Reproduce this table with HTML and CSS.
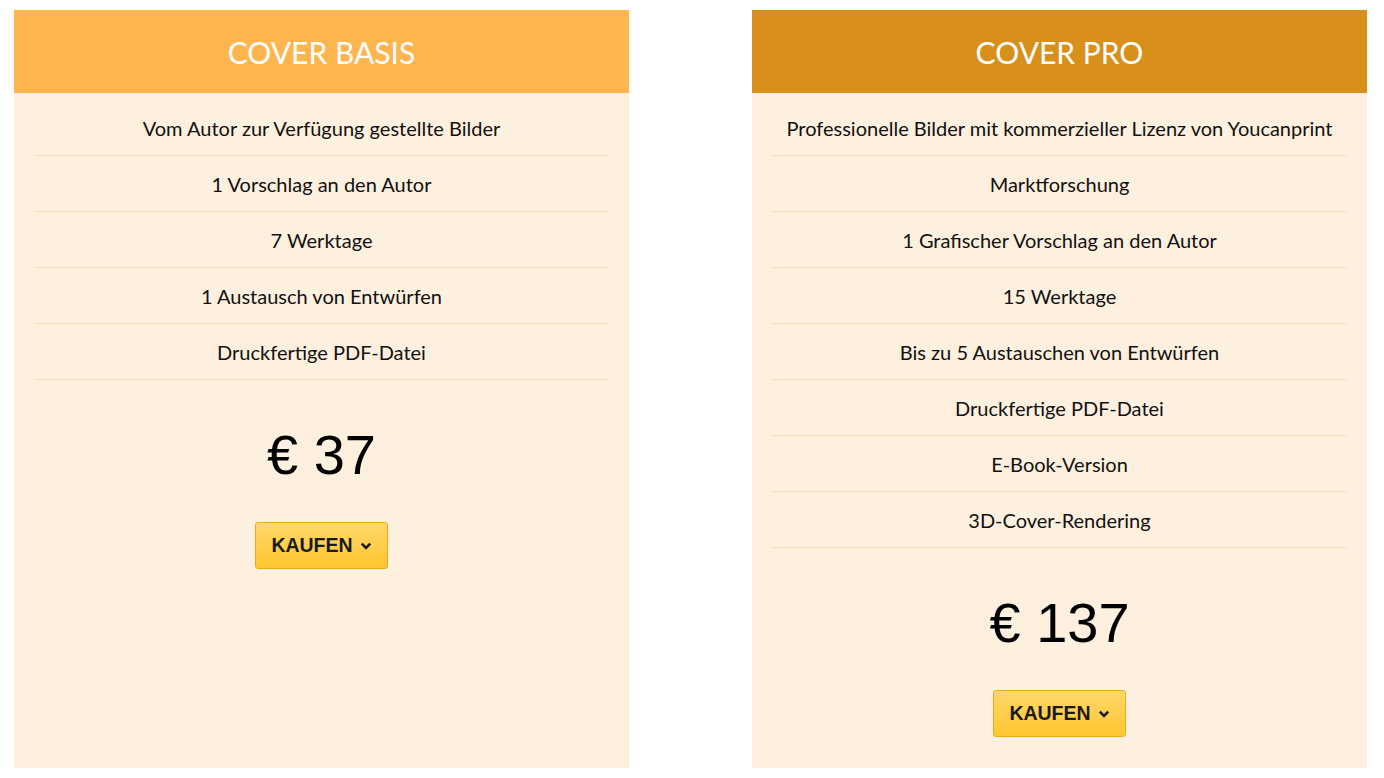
FILE: index.html
```html
<!DOCTYPE html>
<html lang="de">
<head>
<meta charset="utf-8">
<title>Cover</title>
<link rel="stylesheet" href="styles.css">
</head>
<body>
<div class="plans">
  <section class="card">
    <h2 class="card-head basis">COVER BASIS</h2>
    <ul class="features">
      <li>Vom Autor zur Verfügung gestellte Bilder</li>
      <li>1 Vorschlag an den Autor</li>
      <li>7 Werktage</li>
      <li>1 Austausch von Entwürfen</li>
      <li>Druckfertige PDF-Datei</li>
    </ul>
    <div class="price">€ 37</div>
    <button class="buy">KAUFEN <svg class="chev" viewBox="0 0 12 8" width="12" height="8"><path d="M1.8 1.6 L6 5.8 L10.2 1.6" fill="none" stroke="#1a1a1a" stroke-width="2.6"/></svg></button>
  </section>
  <section class="card">
    <h2 class="card-head pro">COVER PRO</h2>
    <ul class="features">
      <li>Professionelle Bilder mit kommerzieller Lizenz von Youcanprint</li>
      <li>Marktforschung</li>
      <li>1 Grafischer Vorschlag an den Autor</li>
      <li>15 Werktage</li>
      <li>Bis zu 5 Austauschen von Entwürfen</li>
      <li>Druckfertige PDF-Datei</li>
      <li>E-Book-Version</li>
      <li>3D-Cover-Rendering</li>
    </ul>
    <div class="price">€ 137</div>
    <button class="buy">KAUFEN <svg class="chev" viewBox="0 0 12 8" width="12" height="8"><path d="M1.8 1.6 L6 5.8 L10.2 1.6" fill="none" stroke="#1a1a1a" stroke-width="2.6"/></svg></button>
  </section>
</div>
</body>
</html>
```
FILE: styles.css
```css
html, body {
  margin: 0;
  padding: 0;
  background: #ffffff;
}
body {
  font-family: "Lato", "Liberation Sans", sans-serif;
  color: #111;
}
.plans {
  display: flex;
  gap: 123px;
  padding: 10px 17px 10px 14px;
  height: 758px;
}
.card {
  width: 615px;
  background: #fef0de;
  display: flex;
  flex-direction: column;
  align-items: center;
}
.card-head {
  margin: 0;
  width: 100%;
  height: 83px;
  display: flex;
  align-items: center;
  justify-content: center;
  color: #fff;
  font-weight: 400;
  font-size: 30px;
}
.basis { background: #ffb54d; }
.pro { background: #d9901b; }
.features {
  list-style: none;
  margin: 0;
  padding: 7px 20px 0;
  width: 100%;
  box-sizing: border-box;
}
.features li {
  text-align: center;
  font-size: 20px;
  line-height: 23px;
  padding: 17px 0 15px;
  border-bottom: 1px solid #f3dcb8;
}
.price {
  font-family: "Liberation Sans", Arial, sans-serif;
  font-size: 56px;
  line-height: 62px;
  margin-top: 44px;
  color: #000;
}
.buy {
  margin-top: 36px;
  width: 133px;
  height: 47px;
  border: 1px solid #f2a81d;
  border-radius: 3px;
  background: linear-gradient(#ffd769, #ffc630);
  font-family: "Liberation Sans", Arial, sans-serif;
  font-weight: 700;
  font-size: 19.5px;
  color: #1a1a1a;
  display: flex;
  align-items: center;
  justify-content: center;
  gap: 7px;
  padding: 0;
}
.chev { display: block; margin-top: 1px; }
```
